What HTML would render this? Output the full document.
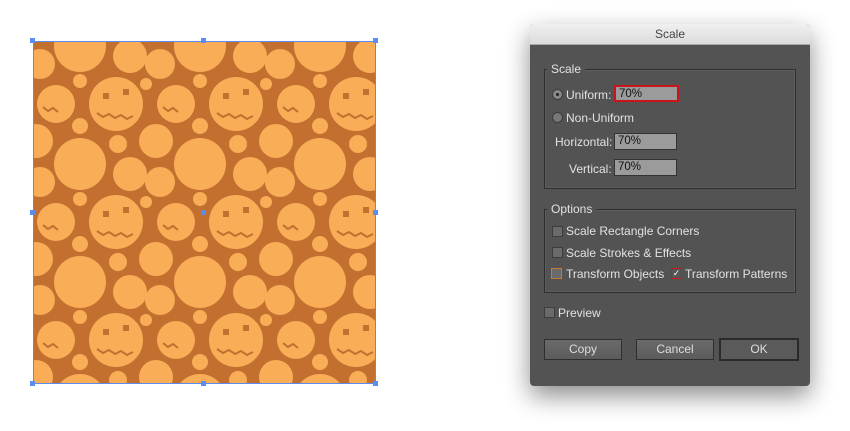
<!DOCTYPE html><html><head><style>
body{margin:0;width:850px;height:431px;background:#fff;position:relative;overflow:hidden;font-family:"Liberation Sans",sans-serif}
.dlg{position:absolute;left:530px;top:24px;width:280px;height:362px;background:#535353;border-radius:4px;box-shadow:0 10px 25px rgba(0,0,0,.45);overflow:hidden}
.tb{height:20px;background:linear-gradient(#f0f0f0,#dcdcdc);color:#444;font-size:12px;text-align:center;line-height:20px;border-bottom:1px solid #aaa}
.a{position:absolute;color:#e2e2e2;font-size:12px;white-space:nowrap}
.grp{position:absolute;border:1px solid #2e2e2e;box-shadow:0 0 0 1px #5e5e5e inset}
.lbl{position:absolute;background:#535353;padding:0 4px;color:#e2e2e2;font-size:12px}
.in{position:absolute;width:60px;height:15px;background:#9b9b9b;border:1px solid #333;color:#111;font-size:11.5px;line-height:15px;padding-left:3px;box-sizing:content-box}
.cb{position:absolute;width:9px;height:9px;background:#6a6a6a;border:1px solid #3c3c3c}
.rd{position:absolute;width:9px;height:9px;border-radius:50%;background:#777;border:1px solid #3c3c3c}
.btn{position:absolute;height:19px;background:linear-gradient(#6a6a6a,#5c5c5c);border:1px solid #2f2f2f;color:#ddd;font-size:12px;text-align:center;line-height:19px}
</style></head><body>
<svg style="position:absolute;left:33px;top:41px" width="343" height="343">
<defs><pattern id="p" patternUnits="userSpaceOnUse" width="120" height="118">
<rect width="120" height="118" fill="#c26f30"/>
<g fill="#f8ad56">
<circle cx="83" cy="63" r="27"/>
<circle cx="47" cy="5" r="26"/><circle cx="47" cy="123" r="26"/>
<circle cx="23" cy="63" r="19"/><circle cx="143" cy="63" r="19"/>
<circle cx="97" cy="15" r="17"/><circle cx="97" cy="133" r="17"/>
<circle cx="3" cy="100" r="17"/><circle cx="123" cy="100" r="17"/>
<circle cx="7" cy="23" r="15"/><circle cx="127" cy="23" r="15"/>
<circle cx="47" cy="40" r="7"/><circle cx="47" cy="85" r="8"/>
<circle cx="85" cy="103" r="9"/><circle cx="113" cy="43" r="6"/>
</g>
<g fill="none" stroke="#c26f30" stroke-width="2"><path d="M64 72 l6 4 6-3 6 4 6-3 6 4 6-3"/><path d="M10 66 l5 4 5-3 5 4"/></g>
<g fill="#c26f30"><rect x="70" y="52" width="6" height="6"/><rect x="90" y="48" width="6" height="6"/></g>
</pattern></defs>
<rect width="343" height="343" fill="url(#p)"/>
<rect x="0.5" y="0.5" width="342" height="342" fill="none" stroke="#5b8cf0"/>
</svg>
<div style="position:absolute;left:30px;top:38px;width:5px;height:5px;background:#5b8cf0"></div>
<div style="position:absolute;left:201px;top:38px;width:5px;height:5px;background:#5b8cf0"></div>
<div style="position:absolute;left:373px;top:38px;width:5px;height:5px;background:#5b8cf0"></div>
<div style="position:absolute;left:30px;top:210px;width:5px;height:5px;background:#5b8cf0"></div>
<div style="position:absolute;left:201px;top:210px;width:5px;height:5px;background:#5b8cf0"></div>
<div style="position:absolute;left:373px;top:210px;width:5px;height:5px;background:#5b8cf0"></div>
<div style="position:absolute;left:30px;top:381px;width:5px;height:5px;background:#5b8cf0"></div>
<div style="position:absolute;left:201px;top:381px;width:5px;height:5px;background:#5b8cf0"></div>
<div style="position:absolute;left:373px;top:381px;width:5px;height:5px;background:#5b8cf0"></div>
<div class="dlg"><div class="tb">Scale</div></div>
<div class="grp" style="left:544px;top:69px;width:250px;height:118px"></div>
<div class="lbl" style="left:547px;top:62px">Scale</div>
<div class="rd" style="left:552px;top:89px;background:#888"><div style="width:3px;height:3px;background:#222;border-radius:50%;margin:3px"></div></div>
<div class="a" style="left:566px;top:88px">Uniform:</div>
<div class="in" style="left:614px;top:85px;width:58px;border:2px solid #c8141a;height:13px">70%</div>
<div class="rd" style="left:552px;top:112px"></div>
<div class="a" style="left:566px;top:111px">Non-Uniform</div>
<div class="a" style="left:555px;top:135px">Horizontal:</div>
<div class="in" style="left:614px;top:133px;width:58px">70%</div>
<div class="a" style="left:569px;top:162px">Vertical:</div>
<div class="in" style="left:614px;top:159px;width:58px">70%</div>
<div class="grp" style="left:544px;top:209px;width:250px;height:82px"></div>
<div class="lbl" style="left:547px;top:202px">Options</div>
<div class="cb" style="left:552px;top:226px"></div><div class="a" style="left:566px;top:224px">Scale Rectangle Corners</div>
<div class="cb" style="left:552px;top:247px"></div><div class="a" style="left:566px;top:246px">Scale Strokes &amp; Effects</div>
<div class="cb" style="left:551px;top:268px;border-color:#c87a2a"></div><div class="a" style="left:566px;top:267px">Transform Objects</div>
<div class="cb" style="left:671px;top:268px;border-color:#d0141a;background:#555;color:#fff;font-size:9px;line-height:9px;text-align:center">✓</div><div class="a" style="left:685px;top:267px">Transform Patterns</div>
<div class="cb" style="left:544px;top:307px"></div><div class="a" style="left:558px;top:306px">Preview</div>
<div class="btn" style="left:544px;top:339px;width:76px">Copy</div>
<div class="btn" style="left:636px;top:339px;width:76px">Cancel</div>
<div class="btn" style="left:719px;top:338px;width:76px;border:2px solid #2a2a2a;background:#5a5a5a">OK</div>
</body></html>
